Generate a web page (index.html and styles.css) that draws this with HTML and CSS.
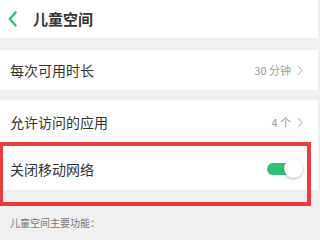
FILE: index.html
```html
<!DOCTYPE html>
<html lang="zh">
<head>
<meta charset="utf-8">
<link rel="stylesheet" href="styles.css">
</head>
<body>
<div class="page">
  <header class="header">
    <svg class="back" width="10" height="16" viewBox="0 0 10 16"><polyline points="7.5,1.5 1.8,8 7.5,14.5" fill="none" stroke="#2fbf73" stroke-width="2.4" stroke-linecap="round" stroke-linejoin="round"/></svg>
    <span class="title">儿童空间</span>
  </header>
  <div class="row row1">
    <span class="label">每次可用时长</span>
    <span class="value">30 分钟<svg class="arrow" width="6" height="11" viewBox="0 0 6 11"><polyline points="1,1 5,5.5 1,10" fill="none" stroke="#a8a8a8" stroke-width="1"/></svg></span>
  </div>
  <div class="row row2">
    <span class="label">允许访问的应用</span>
    <span class="value">4 个<svg class="arrow" width="6" height="11" viewBox="0 0 6 11"><polyline points="1,1 5,5.5 1,10" fill="none" stroke="#a8a8a8" stroke-width="1"/></svg></span>
  </div>
  <div class="row row3">
    <span class="label">关闭移动网络</span>
    <span class="switch"><span class="knob"></span></span>
  </div>
  <div class="note">儿童空间主要功能：</div>
  <div class="highlight"></div>
</div>
</body>
</html>
```

FILE: styles.css
```css
html, body {
  margin: 0;
  padding: 0;
}
body {
  background: #f0f0f0;
  font-family: "Noto Sans CJK SC", "Noto Sans", sans-serif;
  width: 318px;
  height: 229px;
  overflow: hidden;
}
.page {
  position: relative;
  height: 229px;
}
.header {
  height: 38px;
  background: #fff;
  display: flex;
  align-items: center;
  padding-left: 8px;
}
.back {
  display: block;
  margin-right: 15px;
  margin-top: -1px;
}
.title {
  font-size: 15px;
  font-weight: bold;
  color: #333;
  margin-top: -2px;
}
.row {
  background: #fff;
  display: flex;
  align-items: center;
  justify-content: space-between;
  padding: 0 15px 0 10px;
}
.row1 {
  margin-top: 12px;
  height: 40px;
}
.row2 {
  margin-top: 10px;
  height: 44px;
}
.row3 {
  height: 46px;
}
.label {
  font-size: 14px;
  color: #333;
}
.row3 .label {
  margin-top: 4px;
}
.value {
  font-size: 11px;
  color: #999;
  display: flex;
  align-items: center;
}
.arrow {
  display: block;
  margin-left: 6px;
}
.switch {
  position: relative;
  width: 33px;
  height: 12px;
  border-radius: 6px;
  background: #2fc277;
  margin-right: 3px;
  margin-top: 3px;
}
.knob {
  position: absolute;
  right: -3px;
  top: -4px;
  width: 19px;
  height: 19px;
  border-radius: 50%;
  background: #fff;
  box-shadow: 0 1px 3px rgba(0,0,0,0.3);
}
.note {
  margin-top: 25px;
  padding-left: 10px;
  font-size: 10px;
  color: #777;
}
.highlight {
  position: absolute;
  left: 0;
  top: 142px;
  width: 304px;
  height: 56px;
  border: 4px solid #ec3a3d;
  border-left-width: 3px;
}
```
